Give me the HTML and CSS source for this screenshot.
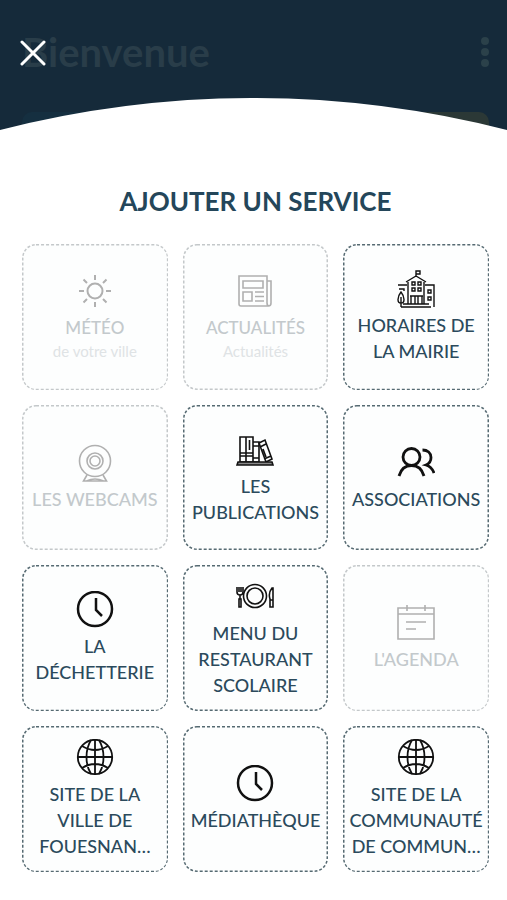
FILE: index.html
```html
<!DOCTYPE html>
<html lang="fr">
<head>
  <meta charset="UTF-8">
  <meta name="viewport" content="width=device-width, initial-scale=1">
  <title>Ajouter un service</title>
  <link rel="stylesheet" href="styles.css">
</head>
<body>

  <header class="entete">
    <div class="barre">
      <span class="bienvenue">Bienvenue</span>
      <svg class="points" viewBox="0 0 8 32"><circle cx="4" cy="5" r="4"/><circle cx="4" cy="16" r="4"/><circle cx="4" cy="27" r="4"/></svg>
    </div>
    <div class="cartes">
      <span class="carte bleue"></span>
      <span class="carte jaune"></span>
    </div>
    <svg class="courbe" viewBox="0 0 507 32" preserveAspectRatio="none"><path d="M0 32A1020 1020 0 0 1 507 32Z"/></svg>
    <button type="button" class="fermer" aria-label="Fermer">
      <svg viewBox="0 0 26 26"><path d="M2 2l22 22M24 2L2 24"/></svg>
    </button>
  </header>

  <main class="panneau">
    <h1>AJOUTER UN SERVICE</h1>

    <div class="grille">
      <button type="button" class="service double" disabled>
        <svg class="icone" viewBox="0 0 38 38" stroke-width="2"><circle cx="19" cy="18" r="7.5"/><path d="M19 2v5M19 29v5M3 18h5M30 18h5M7.500 6.500l3.500 3.500M27 26l3.500 3.500M30.500 6.500L27 10M11 26l-3.500 3.500"/></svg>
        <span class="nom">MÉTÉO</span>
        <span class="detail">de votre ville</span>
      </button>

      <button type="button" class="service double" disabled>
        <svg class="icone" viewBox="0 0 38 38" stroke-width="1.6"><path d="M3 3h28v27q0 3 2.500 3H5q-2 0-2-2zM31 8h4v22q0 3-2.500 3"/><path d="M7 8h20v7H7zM7 19h9v9H7zM19 19h9M19 23.500h9M19 28h9"/></svg>
        <span class="nom">ACTUALITÉS</span>
        <span class="detail">Actualités</span>
      </button>

      <button type="button" class="service">
        <svg class="icone" viewBox="0 0 38 38" stroke-width="1.4"><path d="M19 7V1h4v3h-4M9 12l10-6 10 6M11 12v22M27 12v22M1 15h9M28 15h9v22M2 19h5v2M6 34h26M4 37h30"/><path d="M15 12h3v3h-3zM21 12h3v3h-3zM15 18h3v3h-3zM21 18h3v3h-3zM31 20h3v3h-3zM31 27h3v3h-3zM13 26h13M14 26v8M18 26v8M21 26v8M25 26v8"/><path d="M4 22c-4 5-4 11 0 11s4-6 0-11zM4 27v10"/></svg>
        <span class="nom">HORAIRES DE LA MAIRIE</span>
      </button>

      <button type="button" class="service" disabled>
        <svg class="icone" viewBox="0 0 38 38" stroke-width="1.6"><circle cx="19" cy="17" r="15.5"/><circle cx="19" cy="17" r="8"/><circle cx="19" cy="17" r="5"/><path d="M11 31L7.500 37h23L27 31M10.500 37q8.500-4 17 0"/></svg>
        <span class="nom">LES WEBCAMS</span>
      </button>

      <button type="button" class="service">
        <svg class="icone" viewBox="0 0 38 38" stroke-width="1.6"><path d="M4 6h6v25H4zM10 6h7v25h-7zM17 11h6v20h-6zM4 22h13M4 25h13M17 15h6M17 27h6M13.500 9v10"/><path d="M23 12l6-3 7 19-6 3zM24 16l6-3M28 28l7-3M27 18l3 8"/><path d="M2 31h34l1 3H1z" fill="#888"/></svg>
        <span class="nom">LES PUBLICATIONS</span>
      </button>

      <button type="button" class="service">
        <svg class="icone" viewBox="0 0 38 38" stroke-width="2.8"><circle cx="14.5" cy="13" r="8.5"/><path d="M2 32c2-7 6.500-10.500 12.500-10.500S25 25 27 32M25.500 6c5 0 8.500 3 8.500 7.500 0 3.500-1.500 6-5 7.500 4 1 6.500 4 8 8"/></svg>
        <span class="nom">ASSOCIATIONS</span>
      </button>

      <button type="button" class="service">
        <svg class="icone" viewBox="0 0 38 38" stroke-width="2.5"><circle cx="19" cy="18" r="17"/><path d="M20 7v12l6 6"/></svg>
        <span class="nom">LA DÉCHETTERIE</span>
      </button>

      <button type="button" class="service">
        <svg class="icone" viewBox="0 0 38 38" stroke-width="1.6"><circle cx="19" cy="18" r="11.5"/><circle cx="19" cy="18" r="8"/><path d="M1 9v5q0 3 3 3t3-3V9M3 9v5M5 9v5M4 17v4M3 21h2v8H3zM34 29V21q-2-6 2-11h1v19zM34 22h3"/></svg>
        <span class="nom">MENU DU RESTAURANT SCOLAIRE</span>
      </button>

      <button type="button" class="service" disabled>
        <svg class="icone" viewBox="0 0 38 38" stroke-width="1.6"><path d="M1 4h36v31H1zM1 10h36M10 1v6M28 1v6M9 18h20M9 25h10"/></svg>
        <span class="nom">L'AGENDA</span>
      </button>

      <button type="button" class="service">
        <svg class="icone" viewBox="0 0 38 38" stroke-width="1.8"><circle cx="19" cy="18" r="17.2"/><path d="M19 1v34M2 18h34M15 1C9 11 9 25 15 35M23 1c6 10 6 24 0 34M6 7q13 8 26 0M6 29q13-8 26 0"/></svg>
        <span class="nom">SITE DE LA VILLE DE FOUESNAN…</span>
      </button>

      <button type="button" class="service">
        <svg class="icone" viewBox="0 0 38 38" stroke-width="2.5"><circle cx="19" cy="18" r="17"/><path d="M20 7v12l6 6"/></svg>
        <span class="nom">MÉDIATHÈQUE</span>
      </button>

      <button type="button" class="service">
        <svg class="icone" viewBox="0 0 38 38" stroke-width="1.8"><circle cx="19" cy="18" r="17.2"/><path d="M19 1v34M2 18h34M15 1C9 11 9 25 15 35M23 1c6 10 6 24 0 34M6 7q13 8 26 0M6 29q13-8 26 0"/></svg>
        <span class="nom">SITE DE LA COMMUNAUTÉ DE COMMUN…</span>
      </button>
    </div>
  </main>

</body>
</html>
```
FILE: styles.css
```css
* {
  box-sizing: border-box;
}
body {
  font-family: Lato, "Open Sans", sans-serif;
  background: #fff;
  margin: 0;
}
.entete {
  position: relative;
  background: #152a3a;
  padding: 32px 18px 0 22px;
}
.barre {
  display: flex;
  justify-content: space-between;
  align-items: center;
  height: 40px;
}
.bienvenue {
  font-size: 40px;
  line-height: 44px;
  font-weight: 700;
  color: #293d49;
}
.points {
  width: 8px;
  height: 32px;
  fill: #2b414a;
}
.cartes {
  display: flex;
  justify-content: space-between;
  padding-top: 40px;
}
.carte {
  width: 31%;
  height: 18px;
  border-radius: 10px 10px 0 0;
}
.bleue {
  background: #152f40;
}
.jaune {
  background: #2b3836;
}
.courbe {
  position: absolute;
  left: 0;
  bottom: 0;
  width: 100%;
  height: 32px;
  fill: #fff;
}
.fermer {
  position: absolute;
  left: 20px;
  top: 40px;
  width: 26px;
  height: 26px;
  padding: 0;
  border: none;
  background: none;
  cursor: pointer;
}
.fermer svg {
  display: block;
  stroke: #fff;
  stroke-width: 3;
  stroke-linecap: round;
}
.panneau {
  padding: 54px 18px 28px 22px;
}
h1 {
  margin: 0 0 26px;
  font-size: 26px;
  line-height: 34px;
  font-weight: 700;
  text-align: center;
  color: #24465a;
}
.grille {
  display: grid;
  grid-template-columns: repeat(3, minmax(0, 1fr));
  gap: 15px;
}
.service {
  display: flex;
  flex-direction: column;
  align-items: center;
  justify-content: center;
  aspect-ratio: 1;
  padding: 0 6px;
  border: none;
  border-radius: 14px;
  background: #fdfefe url("data:image/svg+xml,%3Csvg xmlns='http://www.w3.org/2000/svg' width='100%25' height='100%25'%3E%3Crect width='100%25' height='100%25' rx='14' fill='none' stroke='%23566a72' stroke-width='3' stroke-dasharray='3 2'/%3E%3C/svg%3E");
  font-family: inherit;
  color: #2b4a5c;
  cursor: pointer;
}
.icone {
  width: 38px;
  height: 38px;
  margin-bottom: 4px;
  fill: none;
  stroke: #111;
}
.nom {
  font-size: 18px;
  line-height: 26px;
  font-weight: 500;
}
.double .nom {
  font-size: 17px;
}
.detail {
  font-size: 15px;
  line-height: 20px;
  color: #dfe3e5;
}
.service:disabled {
  background-image: url("data:image/svg+xml,%3Csvg xmlns='http://www.w3.org/2000/svg' width='100%25' height='100%25'%3E%3Crect width='100%25' height='100%25' rx='14' fill='none' stroke='%23c4c8ca' stroke-width='3' stroke-dasharray='3 2'/%3E%3C/svg%3E");
  color: #c3c9cc;
  cursor: default;
}
.service:disabled .icone {
  stroke: #b0b0b0;
}
```
